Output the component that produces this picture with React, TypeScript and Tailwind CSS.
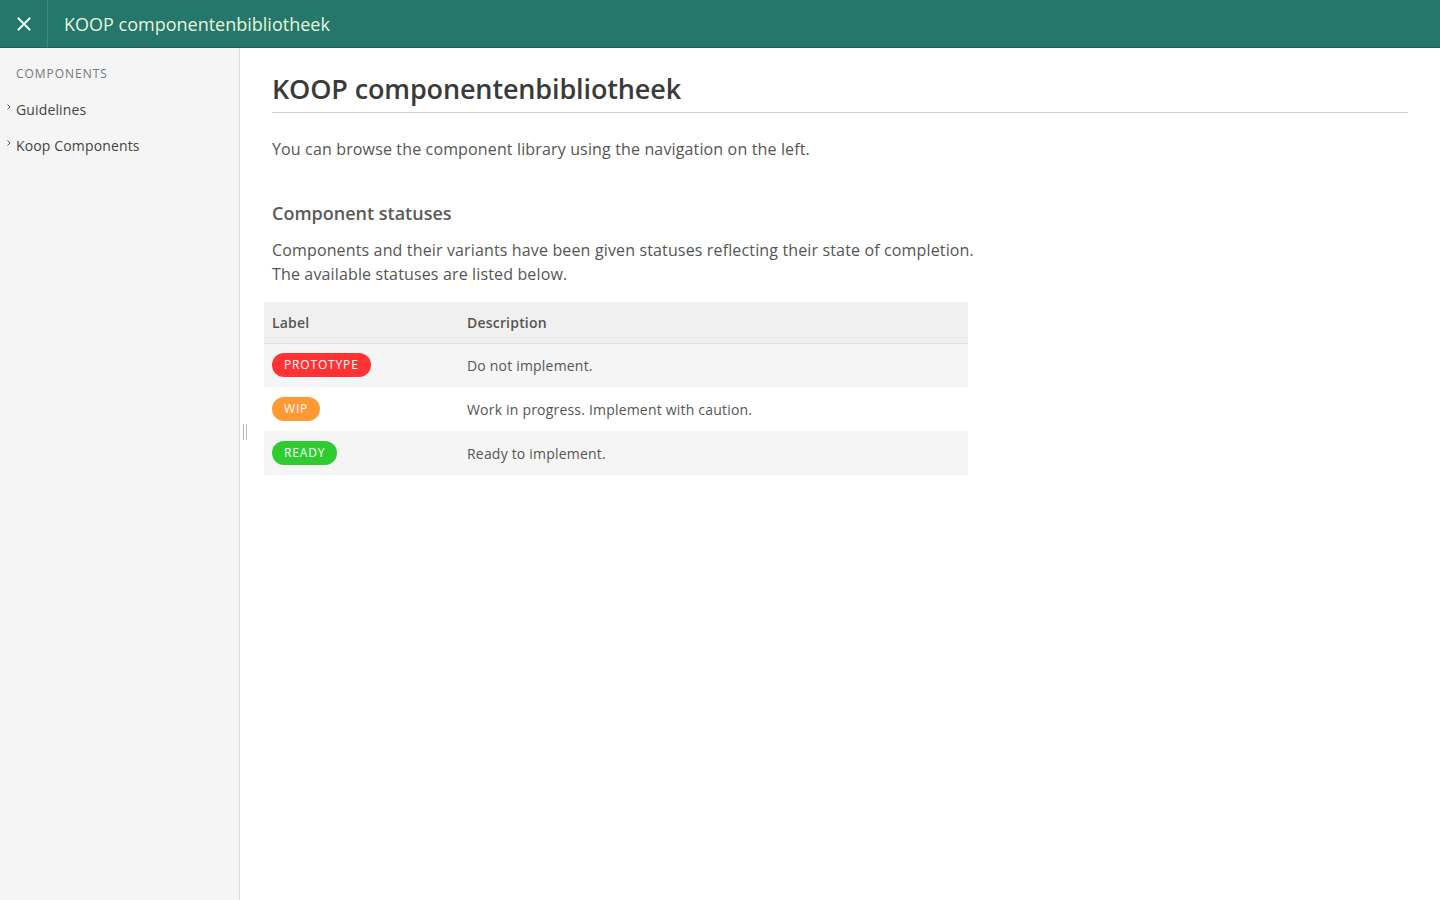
const STATUSES = [
  { label: "PROTOTYPE", bg: "bg-[#ff3333]", text: "Do not implement.", row: "bg-[#f5f5f5]" },
  { label: "WIP", bg: "bg-[#ff9933]", text: "Work in progress. Implement with caution.", row: "bg-white" },
  { label: "READY", bg: "bg-[#2ecc2e]", text: "Ready to implement.", row: "bg-[#f5f5f5]" },
];

function Chevron() {
  return (
    <svg width="6" height="8" viewBox="0 0 6 8" className="mr-[4px] mt-[-4px] text-[#555]">
      <path d="M1.5 1.5 L4 4 L1.5 6.5" fill="none" stroke="currentColor" strokeWidth="1" />
    </svg>
  );
}

export default function App() {
  return (
    <div className="flex h-[900px] flex-col bg-white font-['Open_Sans',sans-serif] text-[#444]">
      <header className="flex h-12 flex-none items-stretch border-b border-[#1c6156] bg-[#24776a]">
        <button className="flex w-12 items-center justify-center border-r border-[#3f8a7e] text-[#eef7e8]">
          <svg width="16" height="16" viewBox="0 0 16 16">
            <path d="M2.5 2.5 L13.5 13.5 M13.5 2.5 L2.5 13.5" stroke="currentColor" strokeWidth="2" strokeLinecap="square" />
          </svg>
        </button>
        <div className="flex items-center pl-4 pt-[1px] text-[18px] text-[#e9f5dc]">KOOP componentenbibliotheek</div>
      </header>

      <div className="flex min-h-0 flex-1">
        <aside className="w-[240px] flex-none border-r border-[#dddddd] bg-[#f5f5f5]">
          <div className="pl-4 pt-[17px] text-[12px] tracking-[0.08em] text-[#777]">COMPONENTS</div>
          <nav className="mt-[15px] flex flex-col gap-[14px] text-[14px] tracking-[0.01em] text-[#444]">
            {["Guidelines", "Koop Components"].map((item) => (
              <div key={item} className="flex h-[22px] items-center pl-[6px]">
                <Chevron />
                <span>{item}</span>
              </div>
            ))}
          </nav>
        </aside>

        <main className="relative flex-1 px-8 pt-[22px]">
          <div className="absolute left-[3px] top-[376px] flex gap-[2px]">
            <span className="h-4 w-px bg-[#bbbbbb]" />
            <span className="h-4 w-px bg-[#bbbbbb]" />
          </div>

          <h1 className="border-b border-[#d4d4d4] pb-[4px] text-[27px] font-semibold leading-[38px] tracking-[-0.005em] text-[#3a3a3a]">
            KOOP componentenbibliotheek
          </h1>
          <p className="mt-[24px] text-[16px] leading-6 tracking-[0.009em] text-[#555]">
            You can browse the component library using the navigation on the left.
          </p>

          <h2 className="mt-[40px] text-[18px] font-semibold leading-6 text-[#5a5a5a]">Component statuses</h2>
          <p className="mt-[13px] text-[16px] leading-6 tracking-[0.009em] text-[#555]">
            Components and their variants have been given statuses reflecting their state of completion.
            <br />
            The available statuses are listed below.
          </p>

          <table className="-ml-2 mt-[16px] w-[704px] border-collapse text-left text-[14px] tracking-[0.014em]">
            <thead>
              <tr className="h-[41px] border-b border-[#e2e2e2] bg-[#f0f0f0]">
                <th className="w-[195px] pl-2 font-semibold text-[#555]">Label</th>
                <th className="pl-2 font-semibold text-[#555]">Description</th>
              </tr>
            </thead>
            <tbody>
              {STATUSES.map((s) => (
                <tr key={s.label} className={`h-[44px] ${s.row}`}>
                  <td className="pl-2">
                    <span className={`inline-flex h-6 items-center rounded-full px-3 text-[12px] tracking-[0.07em] text-white ${s.bg}`}>
                      {s.label}
                    </span>
                  </td>
                  <td className="pl-2 text-[#555]">{s.text}</td>
                </tr>
              ))}
            </tbody>
          </table>
        </main>
      </div>
    </div>
  );
}
